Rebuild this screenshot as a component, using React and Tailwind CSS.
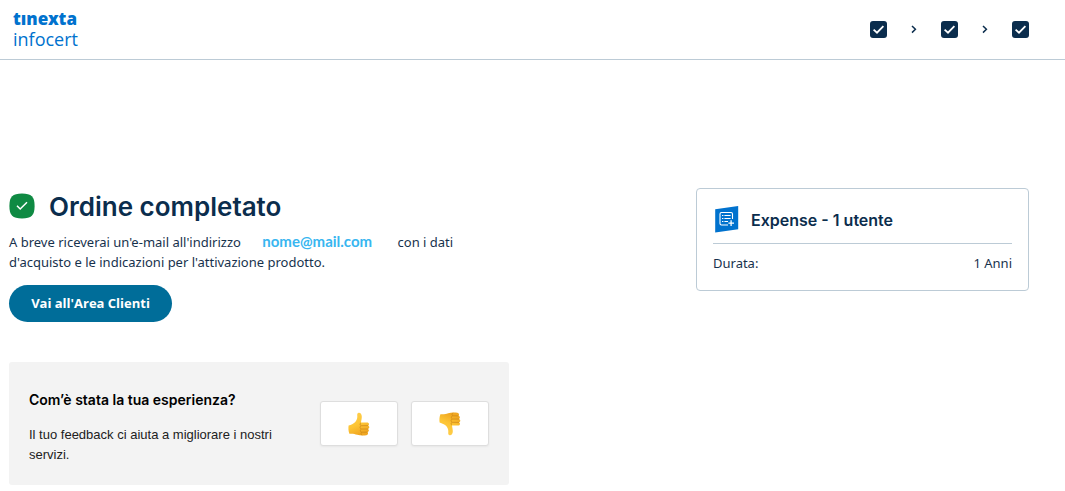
import React from "react";

function StepCheck({ label }) {
  return (
    <li aria-label={label} className="flex h-[17px] w-[17px] items-center justify-center rounded-[3px] bg-[#0b2d4d]">
      <svg viewBox="0 0 17 17" className="h-[17px] w-[17px]" fill="none" stroke="white" strokeWidth="1.8" aria-hidden="true">
        <path d="M3.6 8.6 L7 11.7 L13.4 5.2" />
      </svg>
    </li>
  );
}

function StepArrow() {
  return (
    <li aria-hidden="true" className="flex h-[17px] w-[54px] items-center justify-center">
      <svg viewBox="0 0 8 10" className="h-[10px] w-[8px]" fill="none" stroke="#0b2d4d" strokeWidth="1.5">
        <path d="M2 1 L5.4 4.3 L2 7.6" />
      </svg>
    </li>
  );
}

function Thumb({ down }) {
  return (
    <svg viewBox="0 0 22 24" className="h-[24px] w-[22px]" aria-hidden="true">
      <defs>
        <linearGradient id={down ? "skinDown" : "skinUp"} x1="0" y1="0" x2="0.4" y2="1">
          <stop offset="0" stopColor="#ffd052" />
          <stop offset="0.6" stopColor="#fdc535" />
          <stop offset="1" stopColor="#f0a722" />
        </linearGradient>
      </defs>
      <g transform={down ? "matrix(1 0 0 -1 0 24)" : undefined}>
        <path
          d="M0.6 13.6 C3.2 12.6 5.4 11.8 7 10.2 C8.5 8.6 9.4 6.4 9.3 4.2 C9.2 2.6 9 1 10.6 0.8 C12.8 0.6 13.8 2.6 13.8 4.8 C13.8 7 13.2 8.6 13 10.6 L19 10.4 C21.3 10.4 21.6 13 20 13.6 C21.8 14 21.8 16.6 20 17 C21.4 17.6 21.1 19.8 19.5 20.2 C20.6 21 20 23 18.4 23.2 C15.6 23.6 11.8 23.6 9.2 22.8 C6.6 22 4.8 21.4 1.4 21.8 C0.4 19.4 0.2 16.2 0.6 13.6 Z"
          fill={down ? "url(#skinDown)" : "url(#skinUp)"}
        />
        <path
          d="M13 10.8 C11.8 11.2 11.6 13.2 13.2 13.7 C11.6 14.2 11.7 16.6 13.3 17 C11.9 17.6 12.1 19.9 13.6 20.2 C12.7 21 12.9 22.6 14.2 23.3 M13.2 13.7 L20 13.6 M13.3 17 L20 17 M13.6 20.2 L19.5 20.2"
          fill="none"
          stroke="#d08c1a"
          strokeWidth="0.8"
        />
      </g>
    </svg>
  );
}

function FeedbackButton({ label, down }) {
  return (
    <button
      type="button"
      aria-label={label}
      className="flex h-[45px] w-[78px] items-center justify-center rounded-[3px] border border-[#dedede] bg-white shadow-xs"
    >
      <Thumb down={down} />
    </button>
  );
}

export default function App() {
  return (
    <div className="bg-white font-['Noto_Sans',sans-serif] text-[13px] leading-5 text-[#17324d]">
      <header className="flex h-[60px] items-start justify-between border-b border-[#bccbd6] pr-9 pl-[13px]">
        <a href="#" aria-label="tinexta infocert" className="flex flex-col pt-[9px] leading-5 text-[#0072ce]">
          <span className="text-[17px] font-black">tınexta</span>
          <span className="font-['Open_Sans',sans-serif] text-[18px] font-medium">infocert</span>
        </a>
        <ol className="flex items-center pt-[21px]">
          <StepCheck label="Carrello" />
          <StepArrow />
          <StepCheck label="Pagamento" />
          <StepArrow />
          <StepCheck label="Conferma" />
        </ol>
      </header>

      <main className="flex items-start justify-between pt-32 pr-9 pb-1.5 pl-[9px]">
        <div className="w-[500px]">
          <div className="flex h-9 items-center gap-[14px]">
            <svg viewBox="0 0 26 26" className="h-[26px] w-[26px]" aria-hidden="true">
              <path d="M13 0.4 C22.5 0.4 25.6 3.5 25.6 13 C25.6 22.5 22.5 25.4 13 25.4 C3.5 25.4 0.4 22.5 0.4 13 C0.4 3.5 3.5 0.4 13 0.4 Z" fill="#0f8a43" />
              <path d="M8 12.8 L11.2 16 L18 9.3" fill="none" stroke="white" strokeWidth="1.5" />
            </svg>
            <h1 className="pt-0.5 font-['Inter',sans-serif] text-[26px] leading-9 font-semibold text-[#0b2d4d]">Ordine completato</h1>
          </div>
          <p className="mt-2 w-[470px]">
            A breve riceverai un'e-mail all'indirizzo{" "}
            <span className="mr-[22px] ml-[18px] font-['Lato',sans-serif] text-[15px] leading-4 font-bold text-[#38b6f0]">nome@mail.com</span>{" "}
            con i dati d'acquisto e le indicazioni per l'attivazione prodotto.
          </p>
          <a href="#" className="mt-[13px] flex h-[37px] w-[163px] items-center justify-center rounded-full bg-[#006d99] pb-0.5 font-['Open_Sans',sans-serif] font-bold text-white">
            Vai all'Area Clienti
          </a>

          <section className="mt-10 flex h-[123px] items-center justify-between rounded-[3px] bg-[#f3f3f3] px-5 text-[#212121]">
            <div className="w-[260px] pt-2">
              <h2 className="font-['Inter',sans-serif] text-[14px] font-semibold text-black">Com’è stata la tua esperienza?</h2>
              <p className="mt-[15px] font-['Liberation_Sans',sans-serif]">Il tuo feedback ci aiuta a migliorare i nostri servizi.</p>
            </div>
            <div className="flex gap-[13px]">
              <FeedbackButton label="Mi piace" />
              <FeedbackButton label="Non mi piace" down />
            </div>
          </section>
        </div>

        <aside className="h-[103px] w-[333px] rounded-[4px] border border-[#bccbd6] px-4 pt-4">
          <div className="flex h-[39px] items-start gap-3 border-b border-[#bccbd6] pl-0.5">
            <svg viewBox="0 0 24 28" className="h-7 w-6" fill="none" aria-hidden="true">
              <path d="M0.2 4.2 L23.2 0.9 L23.2 24.2 L0.2 27.6 Z" fill="#0072ce" />
              <g stroke="white" strokeWidth="1.1">
                <path d="M17.5 14 V9 Q17.5 7.5 16 7.5 H6.5 Q5 7.5 5 9 V18.5 Q5 20 6.5 20 H13" />
                <path d="M7 10.5 H8.4 M9.4 10.5 H15.6 M7 13.5 H8.4 M9.4 13.5 H15.6 M7 16.5 H8.4 M9.4 16.5 H13" />
                <path d="M16.1 15.3 V20.9 M13.4 18.1 H19" strokeWidth="1.3" />
              </g>
            </svg>
            <h2 className="pt-[3px] font-['Inter',sans-serif] text-[16px] leading-6 font-semibold text-[#0b2d4d]">Expense - 1 utente</h2>
          </div>
          <dl className="flex justify-between pt-[9px]">
            <dt>Durata:</dt>
            <dd>1 Anni</dd>
          </dl>
        </aside>
      </main>
    </div>
  );
}
